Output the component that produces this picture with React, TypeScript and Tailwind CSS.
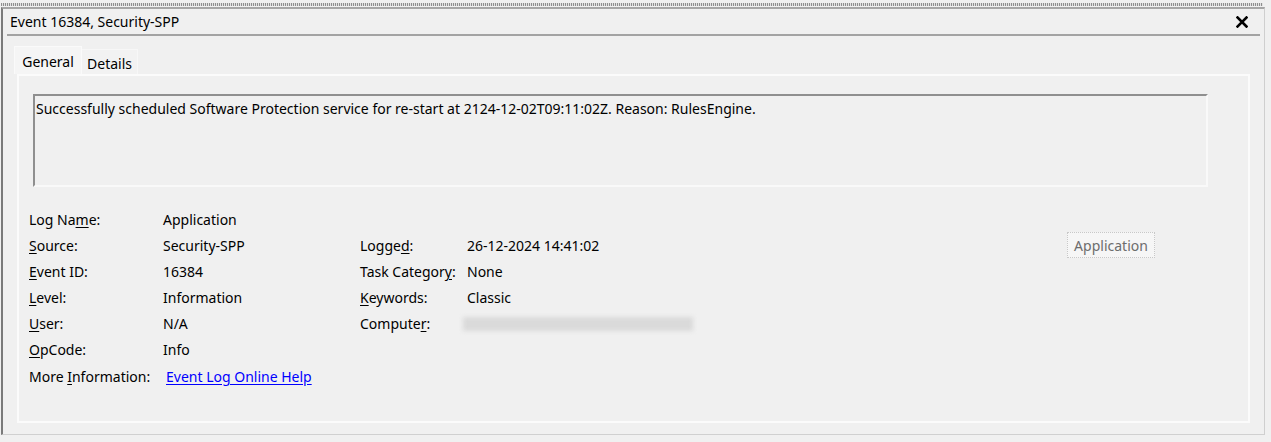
import React from 'react';

type Field = { label: React.ReactNode; value: React.ReactNode };

const U: React.FC<{ children: React.ReactNode }> = ({ children }) => (
  <span className="underline underline-offset-[2px] decoration-[1px]">{children}</span>
);

const CloseIcon = () => (
  <svg width="12" height="12" viewBox="0 0 12 12" className="block">
    <path d="M1.5 1.5 L10.5 10.5 M10.5 1.5 L1.5 10.5" stroke="#000" strokeWidth="2.6" strokeLinecap="square" />
  </svg>
);

const EventDetails: React.FC = () => {
  const left: Field[] = [
    { label: <>Log Na<U>m</U>e:</>, value: 'Application' },
    { label: <><U>S</U>ource:</>, value: 'Security-SPP' },
    { label: <><U>E</U>vent ID:</>, value: '16384' },
    { label: <><U>L</U>evel:</>, value: 'Information' },
    { label: <><U>U</U>ser:</>, value: 'N/A' },
    { label: <><U>O</U>pCode:</>, value: 'Info' },
  ];

  const right: (Field | null)[] = [
    null,
    { label: <>Logge<U>d</U>:</>, value: '26-12-2024 14:41:02' },
    { label: <>Task Categor<U>y</U>:</>, value: 'None' },
    { label: <><U>K</U>eywords:</>, value: 'Classic' },
    {
      label: <>Compute<U>r</U>:</>,
      value: <div className="ml-[-4px] h-[14px] w-[230px] bg-[#dadada] blur-[2px]" />,
    },
    null,
  ];

  return (
    <div className="grid grid-cols-[134px_197px_107px_600px_auto] auto-rows-[26.17px] items-center">
      {left.map((f, i) => (
        <React.Fragment key={i}>
          <div className="whitespace-nowrap">{f.label}</div>
          <div className="whitespace-nowrap">{f.value}</div>
          <div className="whitespace-nowrap">{right[i]?.label}</div>
          <div className="whitespace-nowrap">{right[i]?.value}</div>
          <div>
            {i === 1 && (
              <div className="flex h-[26px] w-[88px] items-center justify-center border border-dotted border-[#c8c8c8] bg-[#f6f6f6] text-[#6d6d6d]">
                Application
              </div>
            )}
          </div>
        </React.Fragment>
      ))}
      <div className="whitespace-nowrap">More <U>I</U>nformation:</div>
      <div className="col-span-4 pl-[3px]">
        <span className="text-[#0000ff] underline underline-offset-[2px]">Event Log Online Help</span>
      </div>
    </div>
  );
};

export default function App() {
  return (
    <div className="h-[442px] w-[1271px] overflow-hidden bg-[#f0f0f0] font-['Noto_Sans',sans-serif] text-[14px] text-black">
      <div className="ml-[1px] mt-[3px] h-[3px] w-[1262px] bg-[repeating-linear-gradient(90deg,#8e8e8e_0px,#8e8e8e_1px,#e2e2e2_1px,#e2e2e2_2px)]" />
      <div className="ml-[1px] mt-[1px] flex h-[428px] w-[1264px] flex-col border-l-2 border-t-2 border-l-[#7a7a7a] border-t-[#a6a6a6] border-r border-b border-r-[#cfcfcf] border-b-[#d0d0d0]">
        <div className="flex h-[25px] items-center justify-between pl-[7px] pr-[16px]">
          <span>Event 16384, Security-SPP</span>
          <CloseIcon />
        </div>
        <div className="mx-[4px] h-[2px] bg-[#a3a3a3]" />

        <div className="mt-[10px] flex items-end pl-[11px]">
          <div className="flex h-[28px] w-[68px] items-center justify-center border border-b-0 border-[#fafafa] bg-[#f5f5f5] pt-[1px]">
            General
          </div>
          <div className="flex h-[25px] w-[56px] items-center justify-center border border-b-0 border-l-0 border-[#f7f7f7] bg-[#f2f2f2] pt-[2px]">
            Details
          </div>
        </div>

        <div className="mb-[11px] ml-[14px] mr-[14px] flex flex-1 flex-col border-2 border-[#fbfbfb] pl-[10px] pt-[18px]">
          <div className="ml-[4px] mr-[40px] h-[93px] border-l-2 border-t-2 border-l-[#8f8f8f] border-t-[#8f8f8f] border-b-2 border-r-2 border-b-[#f9f9f9] border-r-[#f9f9f9] px-[1px] pt-[2px]">
            Successfully scheduled Software Protection service for re-start at 2124-12-02T09:11:02Z. Reason: RulesEngine.
          </div>
          <div className="mt-[19px]">
            <EventDetails />
          </div>
        </div>
      </div>
    </div>
  );
}
